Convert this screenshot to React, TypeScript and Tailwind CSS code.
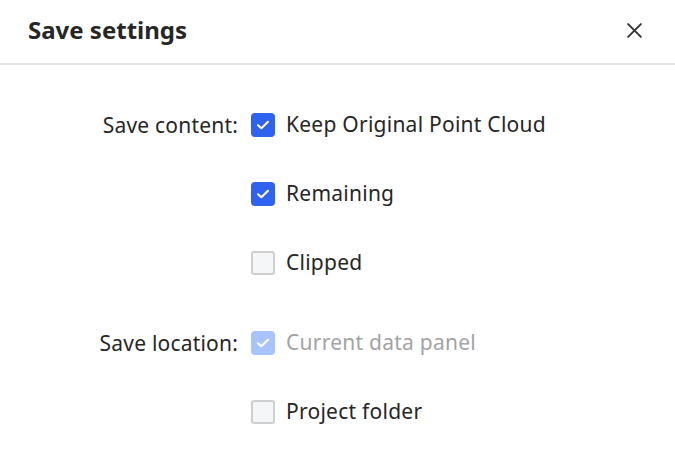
import type React from "react"

type Option = { label: string; checked: boolean; disabled?: boolean }

const groups: { title: string; options: Option[] }[] = [
  {
    title: "Save content:",
    options: [
      { label: "Keep Original Point Cloud", checked: true },
      { label: "Remaining", checked: true },
      { label: "Clipped", checked: false },
    ],
  },
  {
    title: "Save location:",
    options: [
      { label: "Current data panel", checked: true, disabled: true },
      { label: "Project folder", checked: false },
    ],
  },
]

const Check: React.FC<{ checked: boolean; disabled?: boolean }> = ({ checked, disabled }) => {
  if (!checked) {
    return <span className="w-6 h-6 rounded-[3px] border-2 border-[#cfcfcf] bg-[#f5f6f8] shrink-0" />
  }
  return (
    <span
      className={`w-6 h-6 rounded-[4px] flex items-center justify-center shrink-0 ${
        disabled ? "bg-[#a9c3fd]" : "bg-[#3062f0]"
      }`}
    >
      <svg width="16" height="16" viewBox="0 0 16 16" fill="none">
        <path d="M3 8.2 L6.4 11.2 L13 4.8" stroke="white" strokeWidth="2.1" strokeLinecap="round" strokeLinejoin="round" />
      </svg>
    </span>
  )
}

const App: React.FC = () => {
  return (
    <div className="w-[675px] h-[462px] bg-white text-[#262626]" style={{ fontFamily: '"Noto Sans", "Open Sans", sans-serif' }}>
      <div className="h-[65px] flex items-center justify-between pl-[28px] pr-[32px] border-b-2 border-[#e3e3e3]">
        <h2 className="text-[24px] font-bold text-[#262626] mt-[-3px]">Save settings</h2>
        <svg width="17" height="17" viewBox="0 0 16 16" className="mt-[-2px]">
          <path d="M2 2 L14 14 M14 2 L2 14" stroke="#333" strokeWidth="1.8" strokeLinecap="round" />
        </svg>
      </div>
      <div className="pt-[36px] flex flex-col gap-[32px]">
        {groups.map((g) => (
          <div key={g.title} className="flex">
            <div className="w-[238px] text-right text-[21px] leading-[48px] h-[48px] tracking-[0.2px]">{g.title}</div>
            <div className="flex flex-col gap-[21px] pl-[13px]">
              {g.options.map((o) => (
                <label key={o.label} className="flex items-center gap-[11px] h-[48px]">
                  <Check checked={o.checked} disabled={o.disabled} />
                  <span className={`text-[21px] tracking-[0.25px] ${o.disabled ? "text-[#a3a3a3]" : "text-[#262626]"}`}>{o.label}</span>
                </label>
              ))}
            </div>
          </div>
        ))}
      </div>
    </div>
  )
}

export default App
